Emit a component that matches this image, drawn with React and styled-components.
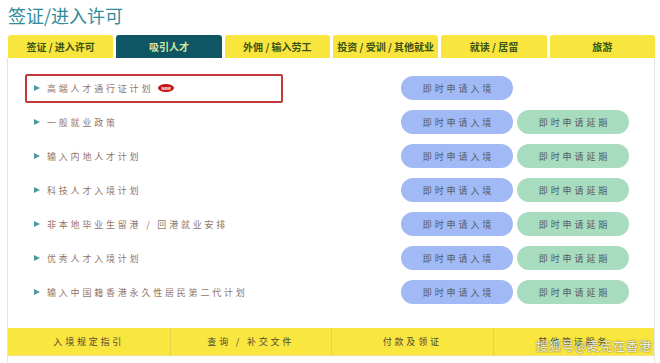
import React from "react";
import styled, { createGlobalStyle } from "styled-components";

const Global = createGlobalStyle`
  html, body { margin: 0; padding: 0; background: #fff; }
  body { font-family: "Noto Sans CJK SC", "Noto Sans", sans-serif; }
`;

const Page = styled.div`
  width: 660px;
  height: 363px;
  overflow: hidden;
  position: relative;
  padding: 0 5px 0 7px;
  box-sizing: border-box;
`;

const Title = styled.h1`
  margin: 0;
  height: 35px;
  padding-left: 1px;
  font-size: 18px;
  line-height: 31px;
  font-weight: 400;
  color: #2f8d9c;
`;

const Tabs = styled.div`
  display: grid;
  grid-template-columns: repeat(6, 1fr);
  column-gap: 3px;
  padding-left: 1px;
  height: 23px;
`;

const Tab = styled.div`
  background: ${(p) => (p.$active ? "#0e5664" : "#f8e63f")};
  color: ${(p) => (p.$active ? "#d9e8a0" : "#3b5215")};
  border-radius: 3px 3px 0 0;
  font-size: 10px;
  font-weight: 700;
  display: flex;
  align-items: center;
  justify-content: center;
`;

const Panel = styled.div`
  border-left: 1px solid #e4e4e4;
  border-right: 1px solid #e4e4e4;
  height: 305px;
  display: flex;
  flex-direction: column;
`;

const List = styled.div`
  padding: 13px 0 0 17px;
  display: flex;
  flex-direction: column;
  height: 270px;
  box-sizing: border-box;
`;

const Row = styled.div`
  display: grid;
  grid-template-columns: 372px 112px 112px;
  column-gap: 4px;
  height: 34px;
  align-items: center;
`;

const Label = styled.div`
  width: 258px;
  height: 29px;
  box-sizing: border-box;
  border: ${(p) => (p.$highlight ? "2px solid #c23a3c" : "2px solid transparent")};
  border-radius: 2px;
  display: flex;
  align-items: center;
  padding-left: 7px;
  font-size: 9px;
  letter-spacing: 2.8px;
  color: #94766a;
  white-space: nowrap;
`;

const Arrow = styled.span`
  width: 0;
  height: 0;
  border-left: 6px solid #4c9aa4;
  border-top: 3.5px solid transparent;
  border-bottom: 3.5px solid transparent;
  margin-right: 7px;
`;

const NewBadge = styled.span`
  margin-left: 5px;
  width: 16px;
  height: 8px;
  border-radius: 50%;
  background: #c4161c;
  color: #fff;
  font-size: 4px;
  font-weight: 700;
  letter-spacing: 0;
  display: inline-flex;
  align-items: center;
  justify-content: center;
  font-family: "Liberation Sans", sans-serif;
`;

const Pill = styled.div`
  height: 24px;
  border-radius: 12px;
  background: ${(p) => (p.$kind === "extend" ? "#a8dcbe" : "#a1baf5")};
  color: #515a64;
  font-size: 9px;
  letter-spacing: 2.9px;
  display: flex;
  align-items: center;
  justify-content: center;
  padding-left: 3px;
`;

const BottomBar = styled.div`
  height: 27px;
  background: #f9e63e;
  display: grid;
  grid-template-columns: repeat(4, 1fr);
  border-bottom: 1px solid #efe08a;
`;

const BottomCell = styled.div`
  display: flex;
  align-items: center;
  justify-content: center;
  font-size: 9px;
  letter-spacing: 2.8px;
  color: #4d4a36;
  & + & { border-left: 1px solid #e3d24a; }
`;

const Watermark = styled.div`
  position: absolute;
  right: 8px;
  bottom: 8px;
  font-size: 12.5px;
  color: rgba(255, 255, 255, 0.92);
  text-shadow: 0 0 2px rgba(0, 0, 0, 0.45), 0 0 1px rgba(0, 0, 0, 0.4);
  letter-spacing: 0.5px;
`;

const tabs = ["签证 / 进入许可", "吸引人才", "外佣 / 输入劳工", "投资 / 受训 / 其他就业", "就读 / 居留", "旅游"];

const rows = [
  { label: "高端人才通行证计划", isNew: true, extend: false },
  { label: "一般就业政策", extend: true },
  { label: "输入内地人才计划", extend: true },
  { label: "科技人才入境计划", extend: true },
  { label: "非本地毕业生留港 / 回港就业安排", extend: true },
  { label: "优秀人才入境计划", extend: true },
  { label: "输入中国籍香港永久性居民第二代计划", extend: true },
];

const bottom = ["入境规定指引", "查询 / 补交文件", "付款及领证", "其他签证服务"];

export default function App() {
  return (
    <>
      <Global />
      <Page>
        <Title>签证/进入许可</Title>
        <Tabs>
          {tabs.map((t, i) => (
            <Tab key={t} $active={i === 1}>{t}</Tab>
          ))}
        </Tabs>
        <Panel>
          <List>
            {rows.map((r) => (
              <Row key={r.label}>
                <Label $highlight={r.isNew}>
                  <Arrow />
                  {r.label}
                  {r.isNew && <NewBadge>NEW</NewBadge>}
                </Label>
                <Pill $kind="enter">即时申请入境</Pill>
                {r.extend ? <Pill $kind="extend">即时申请延期</Pill> : <span />}
              </Row>
            ))}
          </List>
          <BottomBar>
            {bottom.map((b) => (
              <BottomCell key={b}>{b}</BottomCell>
            ))}
          </BottomBar>
        </Panel>
        <Watermark>搜狐号@麦克在香港</Watermark>
      </Page>
    </>
  );
}
